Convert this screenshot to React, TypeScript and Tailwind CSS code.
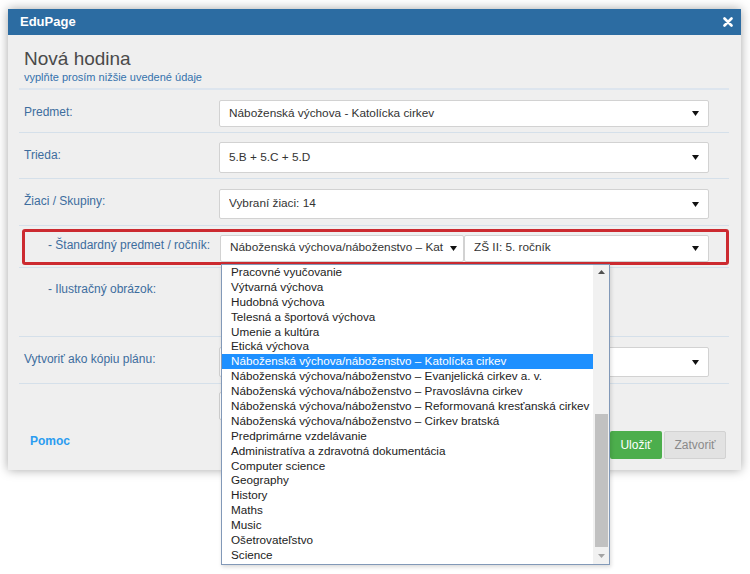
import React from "react";

const Arrow = ({ color = "#111" }: { color?: string }) => (
  <svg width="7" height="5" viewBox="0 0 7 5" className="shrink-0">
    <polygon points="0,0 7,0 3.5,5" fill={color} />
  </svg>
);

const Select = ({ text, h, className = "" }: { text: string; h: string; className?: string }) => (
  <div
    className={`bg-white border border-[#d2d2d2] rounded-[2px] flex items-center gap-[3px] pl-[9px] pr-[9px] text-[11.8px] text-[#333] ${h} ${className}`}
  >
    <span className="flex-1 min-w-0 overflow-hidden whitespace-nowrap">{text}</span>
    <Arrow />
  </div>
);

const items = [
  "Pracovné vyučovanie",
  "Výtvarná výchova",
  "Hudobná výchova",
  "Telesná a športová výchova",
  "Umenie a kultúra",
  "Etická výchova",
  "Náboženská výchova/náboženstvo – Katolícka cirkev",
  "Náboženská výchova/náboženstvo – Evanjelická cirkev a. v.",
  "Náboženská výchova/náboženstvo – Pravoslávna cirkev",
  "Náboženská výchova/náboženstvo – Reformovaná kresťanská cirkev",
  "Náboženská výchova/náboženstvo – Cirkev bratská",
  "Predprimárne vzdelávanie",
  "Administratíva a zdravotná dokumentácia",
  "Computer science",
  "Geography",
  "History",
  "Maths",
  "Music",
  "Ošetrovateľstvo",
  "Science",
];

export default function App() {
  return (
    <div
      className="relative w-[750px] h-[574px] bg-white pt-[9px] pl-[8px] overflow-hidden"
      style={{ fontFamily: '"Liberation Sans", Arial, sans-serif' }}
    >
      <div className="w-[733px] bg-[#efefef] shadow-[0_0_10px_rgba(0,0,0,0.35)]">
        {/* header */}
        <div className="h-[26px] bg-[#2c6ca2] flex items-center justify-between pl-[12px] pr-[8px]">
          <span className="text-white font-bold text-[13px]">EduPage</span>
          <svg width="10" height="10" viewBox="0 0 10 10">
            <path d="M1.5 1.5 L8.5 8.5 M8.5 1.5 L1.5 8.5" stroke="#fff" strokeWidth="2.6" strokeLinecap="round" />
          </svg>
        </div>
        {/* body */}
        <div className="pl-[11px] pr-[12px]">
          <div className="pt-[13px] pb-[4px] pl-[5px] border-b-2 border-[#dde5ee]">
            <div className="text-[19px] leading-[22px] text-[#4a4a4a]">Nová hodina</div>
            <div className="text-[11px] leading-[14px] text-[#3572ad]">vyplňte prosím nižšie uvedené údaje</div>
          </div>

          {/* Predmet */}
          <div className="flex border-b border-[#d5e0ea] pt-[10px] pb-[5px]">
            <div className="w-[200px] pl-[5px] pt-[4px] text-[12px] leading-[16px] text-[#3d6d9e]">Predmet:</div>
            <Select text="Náboženská výchova - Katolícka cirkev" h="h-[27px]" className="w-[490px]" />
          </div>
          {/* Trieda */}
          <div className="flex border-b border-[#d5e0ea] pt-[9px] pb-[5px]">
            <div className="w-[200px] pl-[5px] pt-[5px] text-[12px] leading-[16px] text-[#3d6d9e]">Trieda:</div>
            <Select text="5.B + 5.C + 5.D" h="h-[31px]" className="w-[490px]" />
          </div>
          {/* Ziaci */}
          <div className="flex border-b border-[#d5e0ea] pt-[10px] pb-[6px]">
            <div className="w-[200px] pl-[5px] pt-[4px] text-[12px] leading-[16px] text-[#3d6d9e]">Žiaci / Skupiny:</div>
            <Select text="Vybraní žiaci: 14" h="h-[30px]" className="w-[490px]" />
          </div>
          {/* Standard row */}
          <div className="border-b border-[#d5e0ea] pt-[3px] pb-[2px]">
            <div className="ml-[3px] h-[36px] border-[3px] border-[#cc2a30] rounded-[3px] flex items-center">
              <div className="w-[195px] pl-[23px] text-[12px] leading-[16px] text-[#3d6d9e] -mt-[4px]">
                - Štandardný predmet / ročník:
              </div>
              <Select
                text="Náboženská výchova/náboženstvo – Kat"
                h="h-[27px]"
                className="w-[244px] !pr-[6px] mt-[2px]"
              />
              <Select text="ZŠ II: 5. ročník" h="h-[27px]" className="w-[245px] mt-[2px]" />
            </div>
          </div>
          {/* Ilustracny */}
          <div className="h-[69px] border-b border-[#d5e0ea] pt-[13px]">
            <div className="pl-[29px] text-[12px] leading-[16px] text-[#3d6d9e]">- Ilustračný obrázok:</div>
          </div>
          {/* Vytvorit */}
          <div className="flex border-b border-[#d5e0ea] pt-[10px] pb-[6px]">
            <div className="w-[200px] pl-[5px] pt-[4px] text-[12px] leading-[16px] text-[#3d6d9e]">
              Vytvoriť ako kópiu plánu:
            </div>
            <Select text="" h="h-[30px]" className="w-[490px]" />
          </div>
          {/* hidden element + footer */}
          <div className="pt-[8px]">
            <div className="ml-[200px] w-[200px] h-[28px] bg-white border border-[#cfcfcf] rounded-[2px]" />
          </div>
          <div className="flex justify-between items-start mt-[11px] pb-[11px] pl-[11px] pr-[3px]">
            <span className="pt-[2px] text-[12px] leading-[16px] font-bold text-[#2b9cf0]">Pomoc</span>
            <div className="flex gap-[2px]">
              <div className="w-[52px] h-[28px] bg-[#4cae4c] rounded-[2px] text-white text-[12px] flex items-center justify-center">
                Uložiť
              </div>
              <div className="w-[62px] h-[28px] bg-[#e2e2e2] border border-[#d2d2d2] rounded-[2px] text-[#8a8a8a] text-[12px] flex items-center justify-center">
                Zatvoriť
              </div>
            </div>
          </div>
        </div>
      </div>

      {/* open dropdown list */}
      <div className="absolute left-[221px] top-[264px] w-[389px] h-[301px] bg-white border border-[#8299b8] flex shadow-[1px_2px_4px_rgba(0,0,0,0.15)]">
        <div className="flex-1 min-w-0 overflow-hidden">
          {items.map((it) => (
            <div
              key={it}
              className={`h-[14.9px] leading-[14.9px] pl-[9px] text-[11.7px] whitespace-nowrap ${
                it === items[6] ? "bg-[#1e90ff] text-white" : "text-[#222]"
              }`}
            >
              {it}
            </div>
          ))}
        </div>
        <div className="w-[16px] bg-[#f1f1f1] flex flex-col items-center">
          <div className="h-[14px] flex items-center justify-center">
            <svg width="7" height="4" viewBox="0 0 7 4">
              <polygon points="0,4 7,4 3.5,0" fill="#505050" />
            </svg>
          </div>
          <div className="h-[135px]" />
          <div className="w-[13px] h-[133px] bg-[#c1c1c1]" />
          <div className="flex-1 flex items-center justify-center">
            <svg width="7" height="4" viewBox="0 0 7 4">
              <polygon points="0,0 7,0 3.5,4" fill="#a3a3a3" />
            </svg>
          </div>
        </div>
      </div>
    </div>
  );
}
